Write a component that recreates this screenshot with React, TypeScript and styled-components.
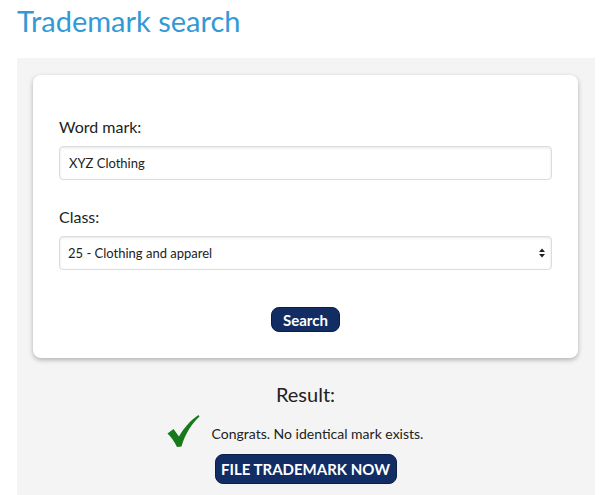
import React from 'react';
import styled, {createGlobalStyle} from "styled-components";

const GlobalStyle = createGlobalStyle`
  body {
    margin: 0;
    background: #ffffff;
    font-family: Lato, "Open Sans", sans-serif;
    color: #222;
  }
`

const CheckIcon = () => (
  <svg width="34" height="34" viewBox="0 0 34 34">
    <path
      d="M1.5 19.5 L7.5 15 L13 22.5 C18 14 24 6.5 32.5 1 L33.5 2.5 C26 9.5 19.5 19 15.5 32.5 L11 33 C8.5 27.5 5.5 23.5 1.5 19.5 Z"
      fill="#17791a"
    />
  </svg>
)

export default function App() {
  return (
    <Page>
      <GlobalStyle/>
      <Title>Trademark search</Title>
      <Panel>
        <Card>
          <Label>Word mark:</Label>
          <TextInput defaultValue="XYZ Clothing"/>
          <Label $top={27}>Class:</Label>
          <SelectBox>
            <span>25 - Clothing and apparel</span>
            <Arrows>
              <svg width="6" height="10" viewBox="0 0 6 10">
                <path d="M0 4 L3 0.5 L6 4 Z M0 6 L3 9.5 L6 6 Z" fill="#222"/>
              </svg>
            </Arrows>
          </SelectBox>
          <ButtonRow>
            <NavyButton $w={69} $h={25}>Search</NavyButton>
          </ButtonRow>
        </Card>
        <Result>
          <ResultTitle>Result:</ResultTitle>
          <ResultRow>
            <CheckIcon/>
            <ResultText>Congrats. No identical mark exists.</ResultText>
          </ResultRow>
          <NavyButton $w={182} $h={30}>FILE TRADEMARK NOW</NavyButton>
        </Result>
      </Panel>
    </Page>
  );
}

const Page = styled.div`
  padding: 0 5px 0 17px;
  height: 495px;
  display: flex;
  flex-direction: column;
  overflow: hidden;
`
const Title = styled.h1`
  margin: 0;
  height: 58px;
  padding-top: 3px;
  box-sizing: border-box;
  font-size: 29px;
  font-weight: 400;
  line-height: 36px;
  color: #3399d6;
`
const Panel = styled.div`
  flex: 1;
  background: #f4f4f4;
  padding: 17px 17px 0 16px;
`
const Card = styled.div`
  background: #ffffff;
  border-radius: 8px;
  box-shadow: 0 2px 5px rgba(0, 0, 0, 0.28);
  padding: 42px 26px 26px;
  display: flex;
  flex-direction: column;
`
const Label = styled.div<{ $top?: number }>`
  font-size: 16px;
  line-height: 20px;
  margin-top: ${p => p.$top || 0}px;
  margin-bottom: 9px;
`
const fieldBox = `
  height: 34px;
  box-sizing: border-box;
  border: 1px solid #dcdcdc;
  border-radius: 4px;
  box-shadow: inset 0 1px 3px rgba(0, 0, 0, 0.1);
  background: #fff;
  font-family: Lato, "Open Sans", sans-serif;
  font-size: 13px;
  color: #222;
`
const TextInput = styled.input`
  ${fieldBox};
  width: 100%;
  padding: 0 9px;
  outline: none;
`
const SelectBox = styled.div`
  ${fieldBox};
  display: flex;
  align-items: center;
  justify-content: space-between;
  padding: 0 6px 0 8px;
`
const Arrows = styled.span`
  display: flex;
  align-items: center;
`
const ButtonRow = styled.div`
  display: flex;
  justify-content: center;
  margin-top: 37px;
`
const NavyButton = styled.button<{ $w: number; $h: number }>`
  width: ${p => p.$w}px;
  height: ${p => p.$h}px;
  border: 1px solid #0a1f45;
  border-radius: 8px;
  background: #112d63;
  color: #fff;
  font-family: Lato, "Open Sans", sans-serif;
  font-weight: 700;
  font-size: 15px;
  padding: 0;
  cursor: pointer;
`
const Result = styled.div`
  display: flex;
  flex-direction: column;
  align-items: center;
  padding-top: 24px;
`
const ResultTitle = styled.div`
  font-size: 20px;
  line-height: 24px;
`
const ResultRow = styled.div`
  display: flex;
  align-items: center;
  gap: 12px;
  margin-top: 8px;
  margin-bottom: 6px;
  padding-right: 22px;
`
const ResultText = styled.span`
  font-size: 14px;
  margin-top: 4px;
`
